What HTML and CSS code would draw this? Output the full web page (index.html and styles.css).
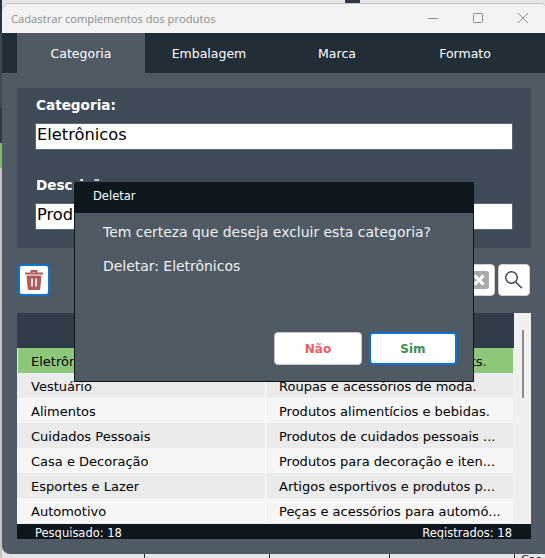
FILE: index.html
```html
<!DOCTYPE html>
<html lang="en">
<head>
    <meta charset="UTF-8">
    <meta name="viewport" content="width=device-width, initial-scale=1.0">
    <title>Cadastrar complementos dos produtos</title>
    <link rel="stylesheet" href="styles.css">
</head>
<body>
    <div class="desk-top"><span class="desk-chip"></span></div>
    <div class="desk-left">
        <span class="seg-top"></span>
        <span class="seg-slate"></span>
        <span class="seg-dark"></span>
        <span class="seg-green"></span>
    </div>
    <div class="window">
        <div class="titlebar">
            <span class="title-text">Cadastrar complementos dos produtos</span>
            <div class="win-controls">
                <svg width="12" height="12" viewBox="0 0 12 12"><path d="M1 6.5h10" stroke="#8b8b8b" fill="none"/></svg>
                <svg width="12" height="12" viewBox="0 0 12 12"><rect x="1.5" y="1.5" width="9" height="9" rx="1" stroke="#8b8b8b" fill="none"/></svg>
                <svg width="12" height="12" viewBox="0 0 12 12"><path d="M1 1l10 10M11 1L1 11" stroke="#8b8b8b" fill="none"/></svg>
            </div>
        </div>
        <div class="tabs">
            <div class="tab active">Categoria</div>
            <div class="tab">Embalagem</div>
            <div class="tab">Marca</div>
            <div class="tab">Formato</div>
        </div>
        <div class="content">
            <div class="form-panel">
                <label class="field-label">Categoria:</label>
                <div class="field-input">Eletrônicos</div>
                <label class="field-label second">Descrição:</label>
                <div class="field-input">Produtos eletrônicos &amp; gadgets.</div>
            </div>
            <div class="toolbar">
                <button class="icon-btn focused">
                    <svg width="18" height="20" viewBox="0 0 18 20"><path d="M6.500 2.500V1h5v1.500M0 3.500h18" stroke="#b05a5c" stroke-width="2" fill="none"/><path d="M1.500 5.500h15l-1.200 13q-.1 1.500-1.600 1.500H4.300q-1.500 0-1.600-1.500z" fill="#b05a5c"/><path d="M7 8.500v8M11 8.500v8" stroke="#fff" stroke-width="1.600" fill="none"/></svg>
                </button>
                <div class="toolbar-right">
                    <button class="icon-btn">
                        <svg width="20" height="18" viewBox="0 0 20 18"><rect x="0" y="0" width="20" height="18" rx="3" fill="#a9a9a9"/><path d="M5.500 4.500l9 9M14.500 4.500l-9 9" stroke="#fff" stroke-width="3" fill="none"/></svg>
                    </button>
                    <button class="icon-btn">
                        <svg width="20" height="18" viewBox="0 0 20 18"><circle cx="7.500" cy="6.500" r="5.800" stroke="#33424f" stroke-width="1.400" fill="none"/><path d="M11.500 10.800l6.500 6.500" stroke="#33424f" stroke-width="1.500" fill="none"/></svg>
                    </button>
                </div>
            </div>
            <div class="table-wrap">
                <div class="table-area">
                    <div class="table-head"><span>Categoria</span><span>Descrição</span></div>
                    <div class="row selected"><span>Eletrônicos</span><span>Produtos eletrônicos &amp; gadgets.</span></div>
                    <div class="row"><span>Vestuário</span><span>Roupas e acessórios de moda.</span></div>
                    <div class="row"><span>Alimentos</span><span>Produtos alimentícios e bebidas.</span></div>
                    <div class="row"><span>Cuidados Pessoais</span><span>Produtos de cuidados pessoais ...</span></div>
                    <div class="row"><span>Casa e Decoração</span><span>Produtos para decoração e iten...</span></div>
                    <div class="row"><span>Esportes e Lazer</span><span>Artigos esportivos e produtos p...</span></div>
                    <div class="row"><span>Automotivo</span><span>Peças e acessórios para automó...</span></div>
                </div>
                <div class="scrollbar"><div class="scroll-thumb"></div></div>
            </div>
            <div class="status-bar"><span>Pesquisado: 18</span><span>Registrados: 18</span></div>
        </div>
        <div class="dialog">
            <div class="dialog-head">Deletar</div>
            <div class="dialog-body">
                <p class="dialog-text">Tem certeza que deseja excluir esta categoria?</p>
                <p class="dialog-text">Deletar: Eletrônicos</p>
            </div>
            <div class="dialog-actions">
                <button class="dialog-btn no">Não</button>
                <button class="dialog-btn yes">Sim</button>
            </div>
        </div>
    </div>
    <div class="desk-bottom"><span></span><span></span><span></span><span class="last">Cas</span></div>
</body>
</html>
```

FILE: styles.css
```css
* {
    box-sizing: border-box;
}
body {
    font-family: "DejaVu Sans", sans-serif;
    background-color: #e4e4e4;
    margin: 0;
    padding: 0;
    width: 545px;
    height: 558px;
    overflow: hidden;
    position: relative;
}
.desk-top {
    height: 3px;
    background: #e6e6e6;
    padding-left: 345px;
}
.desk-chip {
    display: block;
    width: 15px;
    height: 3px;
    background: #2b3a46;
}
.desk-left {
    position: absolute;
    left: 0;
    top: 0;
    width: 2px;
    height: 558px;
    display: flex;
    flex-direction: column;
    background: #c4c4c4;
}
.seg-top {
    height: 33px;
    background: #2b3641;
}
.seg-slate {
    height: 75px;
    background: #3d4a56;
}
.seg-dark {
    height: 35px;
    background: #2e3945;
}
.seg-green {
    height: 25px;
    background: #86b86c;
}
.window {
    position: relative;
    margin-left: 2px;
    width: 545px;
    height: 551px;
    background: #4f5a65;
    border-radius: 8px 8px 0 8px;
    overflow: hidden;
}
.titlebar {
    height: 30px;
    background: #f3f3f3;
    display: flex;
    align-items: center;
    justify-content: space-between;
    padding: 0 18px 1px 9px;
    border-top: 1px solid #c4c4c4;
}
.title-text {
    font-family: "Open Sans", sans-serif;
    font-size: 11.2px;
    color: #8c8c8c;
}
.win-controls {
    display: flex;
    gap: 33px;
}
.tabs {
    height: 40px;
    background: #212e38;
    display: flex;
    padding-left: 15px;
}
.tab {
    width: 128px;
    display: flex;
    align-items: center;
    justify-content: center;
    font-size: 12.5px;
    color: #fff;
}
.tab.active {
    background: #4f5a65;
}
.content {
    padding: 15px 0 0 15px;
    width: 529px;
}
.form-panel {
    background: #3e4a56;
    width: 514px;
    height: 160px;
    padding: 8px 18px;
}
.field-label {
    display: block;
    font-size: 13.6px;
    font-weight: bold;
    color: #fff;
    line-height: 18px;
    padding-left: 1px;
}
.field-label.second {
    margin-top: 26px;
}
.field-input {
    margin-top: 9px;
    height: 27px;
    width: 478px;
    background: #fff;
    border: 1px solid #5c6670;
    color: #000;
    font-size: 16.3px;
    line-height: 22px;
    padding-left: 1px;
}
.toolbar {
    display: flex;
    justify-content: space-between;
    margin-top: 16px;
    width: 513px;
    height: 32px;
    padding-left: 1px;
}
.toolbar-right {
    display: flex;
    gap: 3px;
}
.icon-btn {
    width: 32px;
    height: 32px;
    padding: 0;
    background: #fff;
    border: 1px solid #d0d0d0;
    border-radius: 4px;
    display: flex;
    align-items: center;
    justify-content: center;
}
.icon-btn.focused {
    border: 2px solid #0a74d0;
}
.table-wrap {
    display: flex;
    margin-top: 17px;
    width: 514px;
    height: 211px;
    background: #f0f0f0;
}
.table-area {
    width: 497px;
}
.table-head {
    height: 35px;
    background: #303c47;
    color: #fff;
    font-size: 13px;
    display: flex;
    align-items: center;
}
.table-head span {
    width: 248px;
    text-align: center;
}
.row {
    height: 25px;
    width: 496px;
    display: flex;
    font-size: 13px;
    line-height: 27px;
    color: #000;
    background: #f6f6f6;
}
.row:nth-child(odd) {
    background: #ebebeb;
}
.row.selected {
    background: #8dc87a;
    box-shadow: inset 1px 0 0 #ebebeb;
}
.row span {
    padding-left: 13px;
    white-space: nowrap;
    overflow: hidden;
}
.row span:first-child {
    width: 249px;
    padding-left: 14px;
    border-right: 1px solid #fff;
}
.scrollbar {
    width: 17px;
    padding: 17px 0 0 8px;
}
.scroll-thumb {
    width: 2px;
    height: 68px;
    background: #8a8a8a;
}
.status-bar {
    width: 514px;
    height: 15px;
    background: #0f171e;
    color: #fff;
    font-size: 11.5px;
    line-height: 18px;
    display: flex;
    justify-content: space-between;
    padding: 0 19px 0 18px;
    overflow: hidden;
}
.dialog {
    position: absolute;
    left: 72px;
    top: 179px;
    width: 400px;
    height: 200px;
    background: #4f5a65;
    border: 1px solid #0f171e;
    border-top: none;
}
.dialog-head {
    height: 31px;
    margin: 0 -1px;
    background: #0f171e;
    color: #fff;
    font-size: 11.5px;
    line-height: 29px;
    padding-left: 19px;
}
.dialog-body {
    padding: 10px 0 0 28px;
    height: 119px;
}
.dialog-text {
    margin: 0 0 15px;
    font-size: 13.95px;
    line-height: 19px;
    color: #f2f2f2;
}
.dialog-actions {
    display: flex;
    justify-content: flex-end;
    gap: 7px;
    padding-right: 16px;
}
.dialog-btn {
    width: 88px;
    height: 33px;
    background: #fff;
    border: 1px solid #c9c9c9;
    border-radius: 4px;
    font-family: "DejaVu Sans", sans-serif;
    font-size: 12px;
    font-weight: bold;
}
.dialog-btn.no {
    color: #ef5a63;
}
.dialog-btn.yes {
    color: #3d8f50;
    border: 2px solid #0a74d0;
}
.desk-bottom {
    display: flex;
    height: 4px;
    padding-left: 144px;
    font-size: 11px;
    line-height: 12px;
    overflow: hidden;
}
.desk-bottom span {
    width: 125px;
    border-left: 1px solid #222;
}
.desk-bottom span:nth-child(2) {
    width: 120px;
}
.desk-bottom span.last {
    width: auto;
    padding-left: 6px;
    color: #222;
}
```
